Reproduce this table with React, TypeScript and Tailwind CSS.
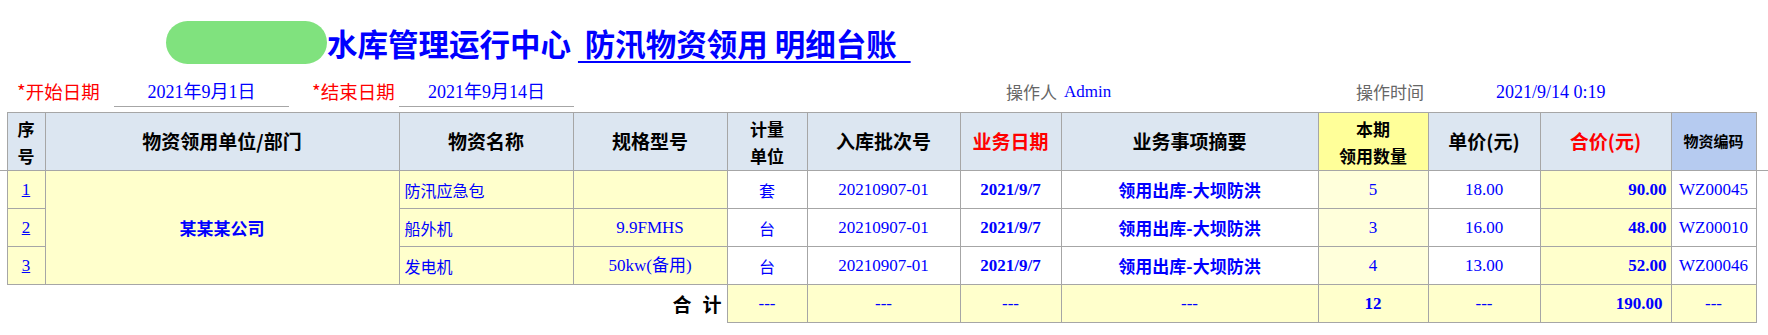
const serif = "font-['Liberation_Serif','Noto_Sans_CJK_SC',serif]";
const sans = "font-['Noto_Sans_CJK_SC','Liberation_Sans',sans-serif]";
const cell = "border border-[#a6a6a6] p-0 align-middle";
const head = "border border-[#a6a6a6] p-0 align-middle bg-[#dce6f1] font-bold";

const rows = [
  { no: "1", name: "防汛应急包", spec: "", unit: "套", batch: "20210907-01", date: "2021/9/7", memo: "领用出库-大坝防洪", qty: "5", price: "18.00", total: "90.00", code: "WZ00045" },
  { no: "2", name: "船外机", spec: "9.9FMHS", unit: "台", batch: "20210907-01", date: "2021/9/7", memo: "领用出库-大坝防洪", qty: "3", price: "16.00", total: "48.00", code: "WZ00010" },
  { no: "3", name: "发电机", spec: "50kw(备用)", unit: "台", batch: "20210907-01", date: "2021/9/7", memo: "领用出库-大坝防洪", qty: "4", price: "13.00", total: "52.00", code: "WZ00046" },
];

function Title() {
  return (
    <div className="flex h-[64px] items-end pl-[166px]">
      <div className="flex h-[43px] items-center">
        <div className="h-[43px] w-[161px] rounded-[22px] bg-[#80e27e]" />
        <div className={`${sans} text-[30.5px] font-bold leading-[36px] text-[#0000ff] whitespace-pre`}>
          <span>水库管理运行中心 </span>
          <span className="underline decoration-2 underline-offset-[5px]">{"\u00a0防汛物资领用 明细台账\u00a0\u00a0"}</span>
        </div>
      </div>
    </div>
  );
}

function FilterBar() {
  return (
    <div className="flex h-[43px] items-end text-[18px] leading-[22px]">
      <div className={`${sans} w-[114px] pb-[5px] pl-[17px] text-[18.5px] text-[#ff0000]`}>*开始日期</div>
      <div className={`${serif} flex h-[43px] w-[175px] items-end justify-center border-b border-[#a6a6a6] pb-[3px] text-[#0000ff]`}>
        2021年9月1日
      </div>
      <div className={`${sans} w-[110px] pb-[5px] pl-[23px] text-[18.5px] text-[#ff0000]`}>*结束日期</div>
      <div className={`${serif} flex h-[43px] w-[175px] items-end justify-center border-b border-[#a6a6a6] pb-[3px] text-[#0000ff]`}>
        2021年9月14日
      </div>
      <div className="w-[432px]" />
      <div className="flex w-[350px] items-end gap-[7px] pb-[4px] text-[17px]">
        <span className={`${sans} text-[#666666]`}>操作人</span>
        <span className={`${serif} text-[#0000ff]`}>Admin</span>
      </div>
      <div className={`${sans} w-[140px] pb-[4px] text-[17px] text-[#666666]`}>操作时间</div>
      <div className={`${serif} pb-[4px] text-[#0000ff]`}>2021/9/14 0:19</div>
    </div>
  );
}

function Ledger() {
  return (
    <table className="mt-[5px] w-[1768px] table-fixed border-collapse">
      <colgroup>
        <col className="w-[7px]" />
        <col className="w-[38px]" />
        <col className="w-[354px]" />
        <col className="w-[174px]" />
        <col className="w-[154px]" />
        <col className="w-[80px]" />
        <col className="w-[153px]" />
        <col className="w-[101px]" />
        <col className="w-[257px]" />
        <col className="w-[110px]" />
        <col className="w-[112px]" />
        <col className="w-[131px]" />
        <col className="w-[85px]" />
        <col className="w-[12px]" />
      </colgroup>
      <thead>
        <tr className={`${sans} h-[58px] text-center`}>
          <td className="p-0" />
          <th className={`${head} text-[17px] leading-[27px] text-black`}>序<br />号</th>
          <th className={`${head} text-[19px] text-black`}>物资领用单位/部门</th>
          <th className={`${head} text-[19px] text-black`}>物资名称</th>
          <th className={`${head} text-[19px] text-black`}>规格型号</th>
          <th className={`${head} text-[17px] leading-[27px] text-black`}>计量<br />单位</th>
          <th className={`${head} text-[19px] text-black`}>入库批次号</th>
          <th className={`${head} text-[19px] text-[#ff0000]`}>业务日期</th>
          <th className={`${head} text-[19px] text-black`}>业务事项摘要</th>
          <th className="border border-[#a6a6a6] bg-[#ffff99] p-0 align-middle text-[17px] font-bold leading-[27px] text-black">
            本期<br />领用数量
          </th>
          <th className={`${head} text-[19px] text-black`}>单价(元)</th>
          <th className={`${head} text-[19px] text-[#ff0000]`}>合价(元)</th>
          <th className="border border-[#a6a6a6] bg-[#b6cbf0] p-0 align-middle text-[15px] font-bold text-black">物资编码</th>
          <td className="p-0" />
        </tr>
      </thead>
      <tbody className="text-[17px] text-[#0000ff]">
        {rows.map((r, i) => (
          <tr key={r.no} className="h-[38px]">
            <td className={i === 0 ? "border-t border-[#a6a6a6] p-0" : "p-0"} />
            <td className={`${cell} ${serif} bg-[#ffffcc] text-center`}>
              <a href="#" className="text-[#0000ff] underline">{r.no}</a>
            </td>
            {i === 0 && (
              <td rowSpan={3} className={`${cell} ${sans} bg-[#ffffcc] text-center font-bold`}>
                某某某公司
              </td>
            )}
            <td className={`${cell} ${sans} bg-[#ffffcc] pl-[5px] text-[16px]`}>{r.name}</td>
            <td className={`${cell} ${serif} bg-[#ffffcc] text-center`}>{r.spec}</td>
            <td className={`${cell} ${sans} bg-white text-center text-[16px]`}>{r.unit}</td>
            <td className={`${cell} ${serif} bg-white text-center`}>{r.batch}</td>
            <td className={`${cell} ${serif} bg-white text-center font-bold`}>{r.date}</td>
            <td className={`${cell} ${sans} bg-white text-center font-bold`}>{r.memo}</td>
            <td className={`${cell} ${serif} bg-[#ffffdb] text-center`}>{r.qty}</td>
            <td className={`${cell} ${serif} bg-white text-center`}>{r.price}</td>
            <td className={`${cell} ${serif} bg-[#ffffcc] pr-[4px] text-right font-bold`}>{r.total}</td>
            <td className={`${cell} ${serif} bg-white text-center`}>{r.code}</td>
            <td className={i === 0 ? "border-t border-[#a6a6a6] p-0" : "p-0"} />
          </tr>
        ))}
        <tr className="h-[38px]">
          <td className="p-0" />
          <td colSpan={4} className={`${sans} p-0 pr-[5px] text-right text-[19px] font-bold text-black`}>
            合<span className="inline-block w-[11px]" />计
          </td>
          <td className={`${cell} ${serif} bg-[#ffffcc] text-center`}>---</td>
          <td className={`${cell} ${serif} bg-[#ffffcc] text-center`}>---</td>
          <td className={`${cell} ${serif} bg-[#ffffcc] text-center`}>---</td>
          <td className={`${cell} ${serif} bg-[#ffffcc] text-center`}>---</td>
          <td className={`${cell} ${serif} bg-[#ffffcc] text-center font-bold`}>12</td>
          <td className={`${cell} ${serif} bg-[#ffffcc] text-center`}>---</td>
          <td className={`${cell} ${serif} bg-[#ffffcc] pr-[8px] text-right font-bold`}>190.00</td>
          <td className={`${cell} ${serif} bg-[#ffffcc] text-center`}>---</td>
          <td className="p-0" />
        </tr>
      </tbody>
    </table>
  );
}

export default function App() {
  return (
    <div className="h-[335px] w-[1768px] overflow-hidden bg-white">
      <Title />
      <FilterBar />
      <Ledger />
    </div>
  );
}
